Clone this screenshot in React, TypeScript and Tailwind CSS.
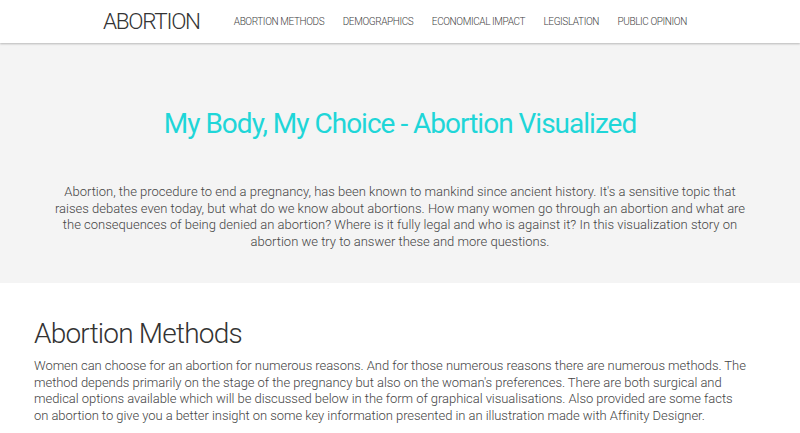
export default function App() {
  const links = ['Abortion Methods', 'Demographics', 'Economical Impact', 'Legislation', 'Public Opinion'];

  return (
    <div className="min-h-screen bg-white font-['Roboto',sans-serif] text-[#333]">
      {/* Navbar */}
      <nav className="h-[43px] bg-white shadow-[0_1px_2px_rgba(0,0,0,0.25)] relative z-10">
        <div className="flex items-center h-full pl-[103px]">
          <span className="text-[22.5px] font-light text-[#333] tracking-[-1.3px] leading-none">ABORTION</span>
          <ul className="flex items-center ml-[34px] gap-[18.5px]">
            {links.map((l) => (
              <li key={l} className="text-[10px] font-light uppercase tracking-[-0.4px] text-[#444]">
                {l}
              </li>
            ))}
          </ul>
        </div>
      </nav>

      {/* Hero */}
      <header className="bg-[#f4f4f4] h-[240px] flex flex-col items-center pt-[67px]">
        <h1 className="text-[28px] font-normal tracking-[-1px] text-[#1fd6d8] leading-none">
          My Body, My Choice - Abortion Visualized
        </h1>
        <p className="mt-[46px] w-[700px] text-center text-[13px] font-light leading-[16.5px] text-[#444]">
          Abortion, the procedure to end a pregnancy, has been known to mankind since ancient history. It's a sensitive topic that raises debates even today, but what do we know about abortions. How many women go through an abortion and what are the consequences of being denied an abortion? Where is it fully legal and who is against it? In this visualization story on abortion we try to answer these and more questions.
        </p>
      </header>

      {/* Section */}
      <section className="pl-[34px] pr-[20px] pt-[37px]">
        <h2 className="text-[28px] font-light tracking-[-0.8px] text-[#333] leading-none">Abortion Methods</h2>
        <p className="mt-[10px] text-[13px] font-light tracking-[-0.05px] leading-[16.5px] text-[#444]">
          Women can choose for an abortion for numerous reasons. And for those numerous reasons there are numerous methods. The
          <br />
          method depends primarily on the stage of the pregnancy but also on the woman's preferences. There are both surgical and
          <br />
          medical options available which will be discussed below in the form of graphical visualisations. Also provided are some facts
          <br />
          on abortion to give you a better insight on some key information presented in an illustration made with Affinity Designer.
        </p>
      </section>
    </div>
  );
}
